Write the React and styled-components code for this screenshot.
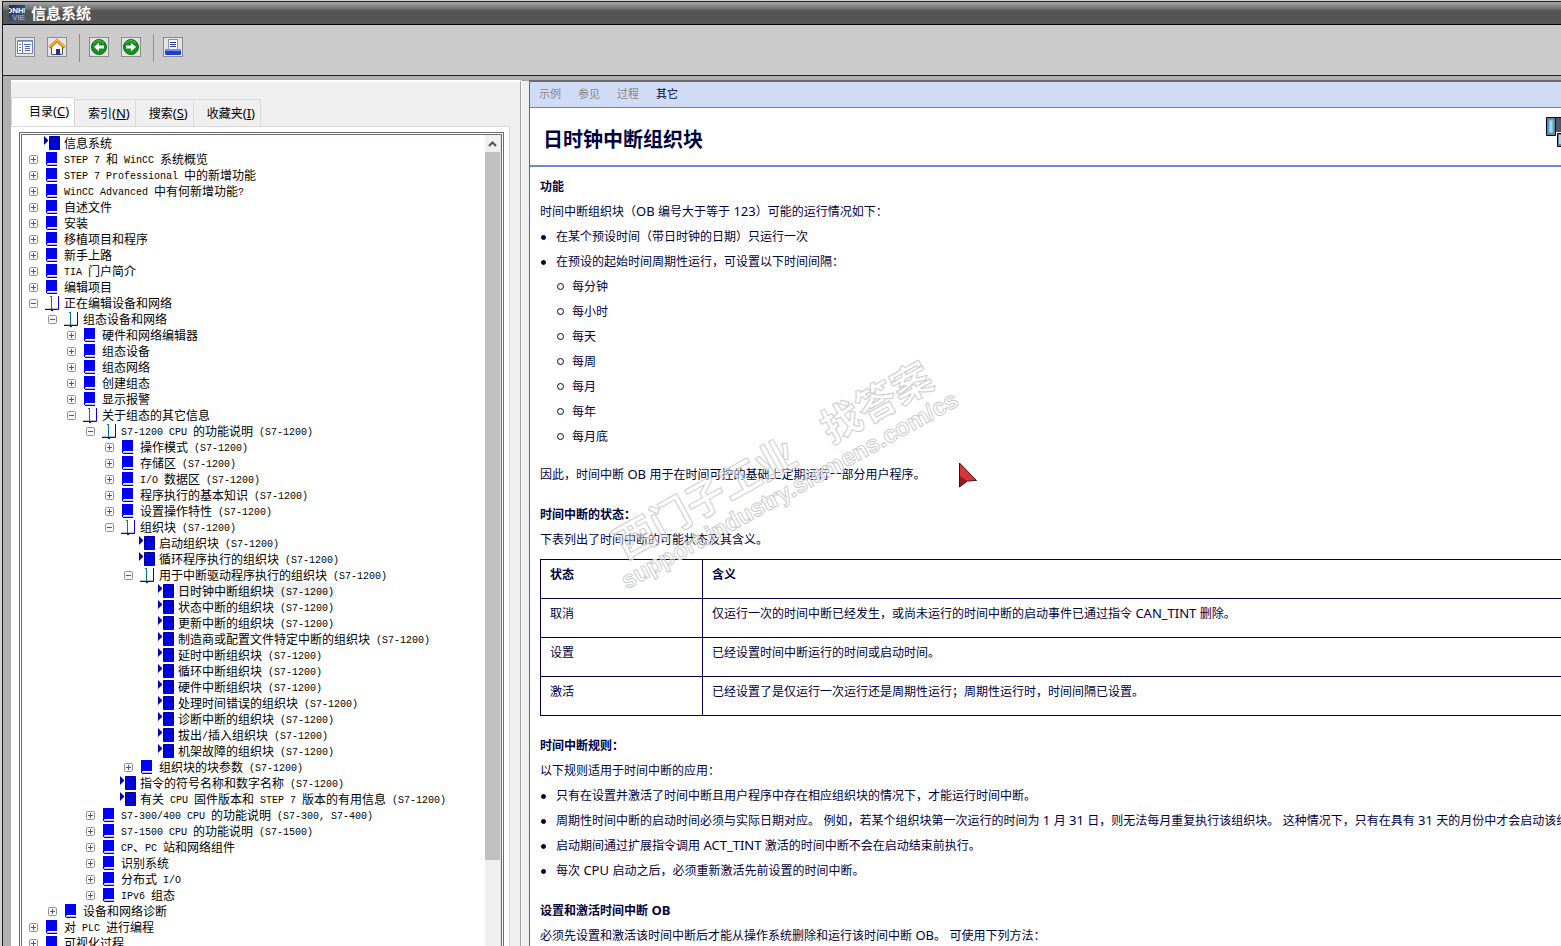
import React from "react";
import styled, { createGlobalStyle } from "styled-components";

const GlobalStyle = createGlobalStyle`
  * {
    box-sizing: border-box;
  }
  body {
    margin: 0;
    overflow: hidden;
    background: #d4d4d4;
  }
`;

const TREE = [
  [0, "page", "信息系统"],
  [0, "book", "STEP 7 和 WinCC 系统概览"],
  [0, "book", "STEP 7 Professional 中的新增功能"],
  [0, "book", "WinCC Advanced 中有何新增功能?"],
  [0, "book", "自述文件"],
  [0, "book", "安装"],
  [0, "book", "移植项目和程序"],
  [0, "book", "新手上路"],
  [0, "book", "TIA 门户简介"],
  [0, "book", "编辑项目"],
  [0, "open", "正在编辑设备和网络"],
  [1, "open", "组态设备和网络"],
  [2, "book", "硬件和网络编辑器"],
  [2, "book", "组态设备"],
  [2, "book", "组态网络"],
  [2, "book", "创建组态"],
  [2, "book", "显示报警"],
  [2, "open", "关于组态的其它信息"],
  [3, "open", "S7-1200 CPU 的功能说明 (S7-1200)"],
  [4, "book", "操作模式 (S7-1200)"],
  [4, "book", "存储区 (S7-1200)"],
  [4, "book", "I/O 数据区 (S7-1200)"],
  [4, "book", "程序执行的基本知识 (S7-1200)"],
  [4, "book", "设置操作特性 (S7-1200)"],
  [4, "open", "组织块 (S7-1200)"],
  [5, "page", "启动组织块 (S7-1200)"],
  [5, "page", "循环程序执行的组织块 (S7-1200)"],
  [5, "open", "用于中断驱动程序执行的组织块 (S7-1200)"],
  [6, "page", "日时钟中断组织块 (S7-1200)", true],
  [6, "page", "状态中断的组织块 (S7-1200)"],
  [6, "page", "更新中断的组织块 (S7-1200)"],
  [6, "page", "制造商或配置文件特定中断的组织块 (S7-1200)"],
  [6, "page", "延时中断组织块 (S7-1200)"],
  [6, "page", "循环中断组织块 (S7-1200)"],
  [6, "page", "硬件中断组织块 (S7-1200)"],
  [6, "page", "处理时间错误的组织块 (S7-1200)"],
  [6, "page", "诊断中断的组织块 (S7-1200)"],
  [6, "page", "拔出/插入组织块 (S7-1200)"],
  [6, "page", "机架故障的组织块 (S7-1200)"],
  [5, "book", "组织块的块参数 (S7-1200)"],
  [4, "page", "指令的符号名称和数字名称 (S7-1200)"],
  [4, "page", "有关 CPU 固件版本和 STEP 7 版本的有用信息 (S7-1200)"],
  [3, "book", "S7-300/400 CPU 的功能说明 (S7-300, S7-400)"],
  [3, "book", "S7-1500 CPU 的功能说明 (S7-1500)"],
  [3, "book", "CP、PC 站和网络组件"],
  [3, "book", "识别系统"],
  [3, "book", "分布式 I/O"],
  [3, "book", "IPv6 组态"],
  [1, "book", "设备和网络诊断"],
  [0, "book", "对 PLC 进行编程"],
  [0, "book", "可视化过程"],
];

const TABS = [
  ["目录", "C"],
  ["索引", "N"],
  ["搜索", "S"],
  ["收藏夹", "I"],
];

const INTERVALS = ["每分钟", "每小时", "每天", "每周", "每月", "每年", "每月底"];

const STATES = [
  [
    "取消",
    "仅运行一次的时间中断已经发生，或尚未运行的时间中断的启动事件已通过指令 CAN_TINT 删除。",
  ],
  ["设置", "已经设置时间中断运行的时间或启动时间。"],
  ["激活", "已经设置了是仅运行一次运行还是周期性运行；周期性运行时，时间间隔已设置。"],
];

const RULES = [
  "只有在设置并激活了时间中断且用户程序中存在相应组织块的情况下，才能运行时间中断。",
  "周期性时间中断的启动时间必须与实际日期对应。 例如，若某个组织块第一次运行的时间为 1 月 31 日，则无法每月重复执行该组织块。 这种情况下，只有在具有 31 天的月份中才会启动该组织块。",
  "启动期间通过扩展指令调用 ACT_TINT 激活的时间中断不会在启动结束前执行。",
  "每次 CPU 启动之后，必须重新激活先前设置的时间中断。",
];

const Mixed = ({ text, as: Run }) =>
  text
    .split(/([\x20-\x7e]+)/)
    .map((part, i) => (i % 2 ? <Run key={i}>{part}</Run> : part));

const BookIcon = () => (
  <Glyph viewBox="0 0 16 16">
    <path d="M2 1h11v11H2z" fill="#00f" />
    <path d="M2 12h2l-1 1v1H2z" fill="#00c" />
    <path d="M4 12h9v2H4z" fill="#fff" />
    <path d="M4 13h9v1H4z" fill="#c0c0c0" />
    <path d="M3 14h10v1H3z" fill="#00c" />
  </Glyph>
);

const OpenIcon = () => (
  <Glyph viewBox="0 0 16 16">
    <path d="M1 13.5h13" stroke="#c0c0c0" />
    <path d="M1 14.5h13.500V1" stroke="#00f" fill="none" />
    <path d="M7.500 1v13M6 1.500h1" stroke="#008080" fill="none" />
    <path d="M7 14h2v2H7z" fill="#00f" />
  </Glyph>
);

const PageIcon = () => (
  <Glyph viewBox="0 0 16 16">
    <path d="M0 1l4 4v1l-4 4z" fill="#0000b0" />
    <path d="M5.5 1.5h10v13h-10z" fill="#00f" stroke="#000090" />
    <path d="M6 5.5h9M6 8.5h9M6 11.5h9" stroke="#0000a8" />
  </Glyph>
);

const ICONS = { book: BookIcon, open: OpenIcon, page: PageIcon };

const Expander = ({ open }) => (
  <Toggle type="button" aria-label={open ? "折叠" : "展开"}>
    <svg width="9" height="9" viewBox="0 0 9 9">
      <rect x=".5" y=".5" width="8" height="8" rx="1" fill="#f6f6f6" stroke="#919191" />
      <path d={open ? "M2 4.5h5" : "M2 4.5h5M4.5 2v5"} stroke="#3c5aa0" />
    </svg>
  </Toggle>
);

const ContentsIcon = () => (
  <svg width="18" height="18" viewBox="0 0 18 18">
    <path d="M1.5 2.5h15v13h-15z" fill="#fff" stroke="#6c7fb8" />
    <path d="M2 3h14v1H2z" fill="#8ea4e0" />
    <path d="M6.5 4v11" stroke="#6c7fb8" />
    <path d="M3 6.5h2M3 9.5h2M3 12.5h2M8 6.5h7M9 8.5h5M9 10.5h5M9 12.5h5" stroke="#4c66b8" />
  </svg>
);

const HomeIcon = () => (
  <svg width="18" height="18" viewBox="0 0 18 18">
    <path d="M3.500 8.500L9 3l5.500 5.500v8h-11z" fill="#fffbe8" stroke="#555" />
    <path d="M8 11h4v6H8z" fill="#1f2f9c" />
    <path d="M1.500 9.500L9 2.500l7.500 7" fill="none" stroke="#a86400" strokeWidth="3" />
    <path d="M1.500 9L9 2l7.500 7" fill="none" stroke="#f8ad2d" strokeWidth="2" />
  </svg>
);

const ArrowIcon = ({ forward }) => (
  <svg width="18" height="18" viewBox="0 0 18 18">
    <circle cx="9" cy="9" r="7.500" fill="#15911f" stroke="#0a6d16" />
    <path d="M4 5a6.500 6.500 0 0 1 10 0" fill="none" stroke="#5bbd5f" />
    <path
      d={
        forward
          ? "M4 7.500h5V4.500L14 9l-5 4.500v-3H4z"
          : "M14 7.500H9V4.500L4 9l5 4.500v-3h5z"
      }
      fill="#fff"
    />
  </svg>
);

const PrintIcon = () => (
  <svg width="18" height="18" viewBox="0 0 18 18">
    <path d="M4.500 1.500h9v10h-9z" fill="#fff" stroke="#8292b4" />
    <path d="M6 4.500h6M6 6.500h6M6 8.500h6" stroke="#1d3a8c" />
    <path d="M1 11h3v1h10v-1h3v3H1z" fill="#6a92f4" />
    <path d="M1 13h16v3l-1 1H2l-1-1z" fill="#1b3fd0" />
  </svg>
);

const Logo = () => (
  <svg width="16" height="16" viewBox="0 0 16 16">
    <defs>
      <linearGradient id="logo" x1="0" x2="1" y1="0" y2="1">
        <stop offset="0" stopColor="#1c2a5c" />
        <stop offset="1" stopColor="#5a617c" />
      </linearGradient>
    </defs>
    <path d="M0 0h16v16H0z" fill="url(#logo)" />
    <text x="-3" y="8" fontFamily="Liberation Sans" fontSize="8" fontWeight="700" fill="#fff">
      ONHE
    </text>
    <text x="3" y="15" fontFamily="Liberation Sans" fontSize="8" fontWeight="700" fill="#9a9fb0">
      VIE
    </text>
  </svg>
);

const DeviceIcon = () => (
  <svg width="15" height="30" viewBox="0 0 15 30">
    <path d="M10 0h6v15h-6z" fill="#4b5768" />
    <path d="M10 .5h6" stroke="#00003c" />
    <path d="M.5.5h9v18h-9z" fill="#738095" stroke="#00003c" />
    <path d="M3 3h4v13H3z" fill="#64fafa" stroke="#8a99a8" />
    <path d="M11.500 16.500H20v13h-8.500z" fill="#738095" stroke="#00003c" />
    <path d="M13 18h4v9h-4z" fill="#78f0fa" />
  </svg>
);

const Watermark = () => (
  <WatermarkSvg viewBox="0 0 400 270" aria-hidden="true">
    <g
      transform="rotate(-29)"
      fill="#fff"
      fillOpacity="0.4"
      stroke="#cdcdcd"
      strokeWidth="1"
      fontWeight="700"
    >
      <g fontFamily="Noto Sans CJK SC" fontSize="40">
        <text x="-85" y="205">西门子工业</text>
        <text x="151" y="204">找答案</text>
      </g>
      <text x="-98" y="232" fontFamily="Liberation Sans" fontSize="24">
        support.industry.siemens.com/cs
      </text>
    </g>
  </WatermarkSvg>
);

const Cursor = () => (
  <CursorSvg viewBox="0 0 20 26" aria-hidden="true">
    <path d="M1.500 1l17 17.500-9 .5-8 6z" fill="#d8343c" stroke="#3c1014" />
    <path d="M2 24V14l7 5z" fill="#8c1a20" />
  </CursorSvg>
);

const App = () => {
  return (
    <Window>
      <GlobalStyle />
      <TitleBar>
        <Logo />
        信息系统
      </TitleBar>
      <Toolbar>
        <ToolButton type="button" aria-label="目录">
          <ContentsIcon />
        </ToolButton>
        <ToolButton type="button" aria-label="主页">
          <HomeIcon />
        </ToolButton>
        <Divider />
        <ToolButton type="button" aria-label="后退">
          <ArrowIcon />
        </ToolButton>
        <ToolButton type="button" aria-label="前进">
          <ArrowIcon forward />
        </ToolButton>
        <Divider />
        <ToolButton type="button" aria-label="打印">
          <PrintIcon />
        </ToolButton>
      </Toolbar>
      <Body>
        <Sidebar>
          <Tabs>
            {TABS.map(([label, key], i) => (
              <Tab key={key} type="button" $active={i === 0}>
                {label}
                <SansRun>
                  (<u>{key}</u>)
                </SansRun>
              </Tab>
            ))}
          </Tabs>
          <TabPanel>
            <TreeBox>
              <TreeList>
                {TREE.map(([level, kind, label, selected]) => {
                  const Icon = ICONS[kind];
                  return (
                    <TreeRow key={label} $level={level}>
                      {kind === "page" ? <NoToggle /> : <Expander open={kind === "open"} />}
                      <Icon />
                      <TreeLabel $selected={selected}>
                        <Mixed text={label} as={MonoRun} />
                      </TreeLabel>
                    </TreeRow>
                  );
                })}
              </TreeList>
              <Scrollbar>
                <ScrollUp type="button" aria-label="向上滚动">
                  <svg width="9" height="6" viewBox="0 0 9 6">
                    <path d="M1 5l3.500-3.500L8 5" fill="none" stroke="#505050" strokeWidth="2" />
                  </svg>
                </ScrollUp>
                <Thumb />
              </Scrollbar>
            </TreeBox>
          </TabPanel>
        </Sidebar>
        <Splitter />
        <Viewer>
          <LinkBar>
            <BarLink>示例</BarLink>
            <BarLink>参见</BarLink>
            <BarLink>过程</BarLink>
            <BarLink href="#other">其它</BarLink>
          </LinkBar>
          <Heading>
            <Title>日时钟中断组织块</Title>
            <DeviceIcon />
          </Heading>
          <Article>
            <Subtitle>功能</Subtitle>
            <Paragraph>
              <Mixed text="时间中断组织块（OB 编号大于等于 123）可能的运行情况如下：" as={SansRun} />
            </Paragraph>
            <BulletList>
              <Bullet>在某个预设时间（带日时钟的日期）只运行一次</Bullet>
              <Bullet>
                在预设的起始时间周期性运行，可设置以下时间间隔：
                <BulletList>
                  {INTERVALS.map((item) => (
                    <Bullet key={item} $hollow>
                      {item}
                    </Bullet>
                  ))}
                </BulletList>
              </Bullet>
            </BulletList>
            <Paragraph $spaced>
              <Mixed text="因此，时间中断 OB 用于在时间可控的基础上定期运行一部分用户程序。" as={SansRun} />
            </Paragraph>
            <Subtitle $spaced>时间中断的状态：</Subtitle>
            <Paragraph>下表列出了时间中断的可能状态及其含义。</Paragraph>
            <StateTable>
              <thead>
                <tr>
                  <HeadCell>状态</HeadCell>
                  <HeadCell>含义</HeadCell>
                </tr>
              </thead>
              <tbody>
                {STATES.map(([state, meaning]) => (
                  <tr key={state}>
                    <Cell>{state}</Cell>
                    <Cell>
                      <Mixed text={meaning} as={SansRun} />
                    </Cell>
                  </tr>
                ))}
              </tbody>
            </StateTable>
            <Subtitle $spaced>时间中断规则：</Subtitle>
            <Paragraph>以下规则适用于时间中断的应用：</Paragraph>
            <BulletList>
              {RULES.map((rule) => (
                <Bullet key={rule}>
                  <Mixed text={rule} as={SansRun} />
                </Bullet>
              ))}
            </BulletList>
            <Subtitle $spaced>
              <Mixed text="设置和激活时间中断 OB" as={SansRun} />
            </Subtitle>
            <Paragraph>
              <Mixed
                text="必须先设置和激活该时间中断后才能从操作系统删除和运行该时间中断 OB。 可使用下列方法："
                as={SansRun}
              />
            </Paragraph>
          </Article>
          <Watermark />
          <Cursor />
        </Viewer>
      </Body>
    </Window>
  );
};

export default App;

const Window = styled.div`
  display: flex;
  flex-direction: column;
  height: 100vh;
  margin: 1px 0 0 2px;
  border-left: 1px solid #1c1c20;
  background: #b0b0b0;
  font-family: "Noto Sans CJK SC", sans-serif;
  font-size: 12px;
  overflow: hidden;
`;

const TitleBar = styled.header`
  display: flex;
  flex: none;
  align-items: center;
  gap: 6px;
  height: 24px;
  padding: 0 6px;
  border-top: 1px solid #1c1c20;
  border-bottom: 1px solid #000;
  background: linear-gradient(#a8a8a8, #686868 35%, #545454 40%, #565656);
  color: #fff;
  font-size: 15px;
  font-weight: 700;
  line-height: 22px;
`;

const Toolbar = styled.div`
  display: flex;
  flex: none;
  gap: 12px;
  height: 51px;
  padding: 12px 12px 0;
  border-bottom: 1px solid #1f2428;
  background: #cbcbcb;
`;

const ToolButton = styled.button`
  display: flex;
  align-items: center;
  justify-content: center;
  width: 20px;
  height: 20px;
  padding: 0;
  border: 1px solid #8c8c8c;
  background: #e4e4e4;
`;

const Divider = styled.span`
  width: 1px;
  height: 28px;
  margin: -3px -3px 0 0;
  background: #8f8f8f;
`;

const Body = styled.div`
  display: flex;
  flex: 1;
  min-height: 0;
  padding: 4px 0 0 8px;
`;

const Sidebar = styled.aside`
  display: flex;
  flex: none;
  flex-direction: column;
  width: 510px;
  padding-top: 15px;
  border-top: 2px solid #fff;
  border-right: 1px solid #a0a0a0;
  background: #efefef;
`;

const Tabs = styled.div`
  display: flex;
  flex: none;
  align-items: flex-end;
  height: 29px;
`;

const Tab = styled.button`
  height: ${(props) => (props.$active ? "29px" : "27px")};
  padding: 0 5px ${(props) => (props.$active ? "4px 17px" : "2px 13px")};
  border: 1px solid #d9d9d9;
  border-bottom: 0;
  border-left-width: ${(props) => (props.$active ? "1px" : "0")};
  background: ${(props) => (props.$active ? "#fff" : "#efefef")};
  color: #000;
  font-family: "Noto Sans CJK SC", sans-serif;
  font-size: 12px;
`;

const TabPanel = styled.div`
  flex: 1;
  min-height: 0;
  margin-right: 10px;
  padding: 5px 5px 0 8px;
  border-top: 1px solid #d9d9d9;
  border-right: 1px solid #d9d9d9;
  background: #fff;
`;

const TreeBox = styled.div`
  display: flex;
  height: 100%;
  border: 3px double #696b70;
  border-bottom: 0;
  overflow: hidden;
`;

const TreeList = styled.ul`
  flex: 1;
  margin: 0;
  padding: 0 0 0 7px;
  list-style: none;
`;

const TreeRow = styled.li`
  display: flex;
  align-items: center;
  height: 16px;
  padding-left: ${(props) => props.$level * 19}px;
`;

const Toggle = styled.button`
  display: flex;
  width: 9px;
  height: 9px;
  margin-right: 6px;
  padding: 0;
  border: 0;
  background: none;
`;

const NoToggle = styled.span`
  width: 15px;
`;

const Glyph = styled.svg`
  width: 16px;
  height: 16px;
`;

const TreeLabel = styled.span`
  height: 16px;
  margin-left: 2px;
  padding: 0 2px;
  background: ${(props) => (props.$selected ? "#f0f0f0" : "none")};
  color: #000;
  line-height: 16px;
  white-space: pre;
`;

const MonoRun = styled.span`
  font-family: "Liberation Mono", monospace;
  font-size: 10px;
  line-height: 12px;
  vertical-align: 1px;
`;

const Scrollbar = styled.div`
  width: 16px;
  border-right: 1px solid #e3e3e3;
  background: #f0f0f0;
`;

const ScrollUp = styled.button`
  display: flex;
  align-items: center;
  justify-content: center;
  width: 15px;
  height: 17px;
  padding: 0;
  border: 0;
  background: #f0f0f0;
`;

const Thumb = styled.div`
  height: calc(100% - 104px);
  background: #c0c0c0;
`;

const Splitter = styled.div`
  flex: none;
  width: 8px;
  border-top: 1px solid #a0a0a0;
  border-left: 1px solid #fff;
  background: #efefef;
`;

const Viewer = styled.main`
  position: relative;
  flex: 1;
  min-width: 0;
  border-top: 2px solid #696969;
  border-left: 1px solid #696969;
  background: #fff;
  color: #000040;
  overflow: hidden;
`;

const LinkBar = styled.nav`
  display: flex;
  align-items: center;
  gap: 17px;
  height: 26px;
  padding: 0 9px 3px;
  border-bottom: 1px solid #808080;
  background: #d0dcf6;
`;

const BarLink = styled.a`
  color: ${(props) => (props.href ? "#000040" : "#858585")};
  font-size: 11px;
  text-decoration: none;
`;

const Heading = styled.div`
  display: flex;
  align-items: flex-start;
  justify-content: space-between;
  height: 59px;
  padding: 9px 0 0 13px;
  border-bottom: 2px solid #6a8ad8;
`;

const Title = styled.h1`
  margin: 10px 0 0;
  font-size: 20px;
  line-height: 24px;
`;

const Article = styled.article`
  padding: 6px 0 0 10px;
  line-height: 25px;
  white-space: nowrap;
`;

const Subtitle = styled.h2`
  margin: ${(props) => (props.$spaced ? "15px" : "0")} 0 0;
  font-size: 12px;
`;

const Paragraph = styled.p`
  margin: ${(props) => (props.$spaced ? "13px" : "0")} 0 0;
`;

const SansRun = styled.span`
  font-family: "Noto Sans", sans-serif;
  font-size: 13px;
  line-height: 16px;
`;

const BulletList = styled.ul`
  margin: 0;
  padding: 0;
  list-style: none;
`;

const Bullet = styled.li`
  padding-left: 16px;
  &::before {
    content: "";
    box-sizing: border-box;
    display: inline-block;
    width: ${(props) => (props.$hollow ? "7px" : "5px")};
    height: ${(props) => (props.$hollow ? "7px" : "5px")};
    margin: 0 ${(props) => (props.$hollow ? "8px" : "10px")} 1px -15px;
    border: 1px solid #000040;
    border-radius: 50%;
    background: ${(props) => (props.$hollow ? "none" : "#000040")};
  }
`;

const StateTable = styled.table`
  width: 100%;
  margin: 8px 0 16px;
  border-collapse: collapse;
  border: 1px solid #000040;
  border-right: 0;
`;

const Cell = styled.td`
  height: 39px;
  padding: 1px 9px 0;
  border: 1px solid #000040;
  border-right: 0;
  line-height: 25px;
  vertical-align: top;
  &:first-child {
    width: 162px;
  }
`;

const HeadCell = styled(Cell).attrs({ as: "th" })`
  text-align: left;
`;

const WatermarkSvg = styled.svg`
  position: absolute;
  top: 257px;
  left: 70px;
  width: 400px;
  height: 270px;
  pointer-events: none;
`;

const CursorSvg = styled.svg`
  position: absolute;
  top: 380px;
  left: 428px;
  width: 20px;
  height: 26px;
`;
